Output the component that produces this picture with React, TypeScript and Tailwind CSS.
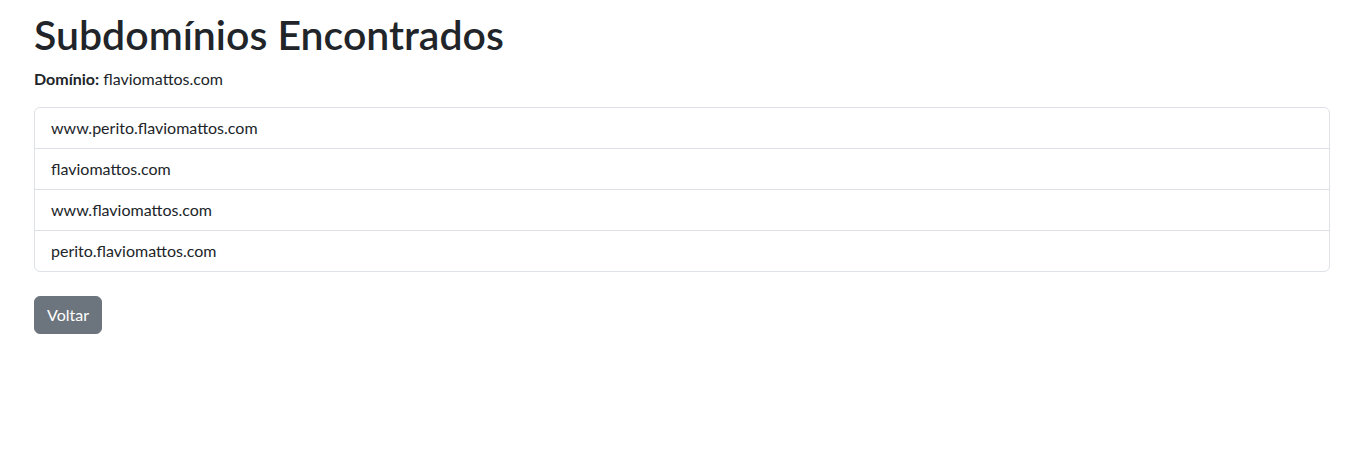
export default function App() {
  const subdomains = [
    'www.perito.flaviomattos.com',
    'flaviomattos.com',
    'www.flaviomattos.com',
    'perito.flaviomattos.com',
  ]

  return (
    <div className="min-h-screen bg-white text-[#212529] font-['Lato',sans-serif]">
      <div className="w-[1296px] ml-[34px] pt-[11px]">
        <h1 className="text-[41px] leading-[48px] font-semibold mb-2">Subdomínios Encontrados</h1>
        <p className="text-base leading-6 mb-4">
          <strong className="font-bold">Domínio:</strong> flaviomattos.com
        </p>
        <ul className="border border-[#dee2e6] rounded-md">
          {subdomains.map((sub, i) => (
            <li
              key={sub}
              className={`px-4 py-2 text-base leading-6 ${i > 0 ? 'border-t border-[#dee2e6]' : ''}`}
            >
              {sub}
            </li>
          ))}
        </ul>
        <button className="mt-6 bg-[#6c757d] text-white text-base leading-6 px-3 py-[6px] border border-[#6c757d] rounded-md">
          Voltar
        </button>
      </div>
    </div>
  )
}
